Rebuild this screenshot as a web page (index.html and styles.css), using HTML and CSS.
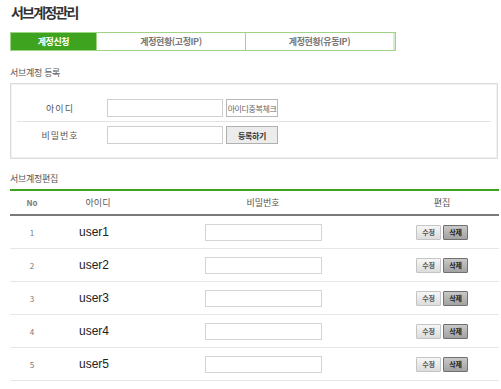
FILE: index.html
```html
<!DOCTYPE html>
<html lang="ko">
<head>
<meta charset="utf-8">
<link rel="stylesheet" href="styles.css">
</head>
<body>
<div class="page">
  <h1 class="title">서브계정관리</h1>
  <div class="tabs">
    <div class="tab tab-1 active">계정신청</div>
    <div class="tab tab-2">계정현황(고정IP)</div>
    <div class="tab tab-3">계정현황(유동IP)</div>
  </div>

  <div class="section-label first">서브계정 등록</div>
  <div class="reg-box">
    <div class="reg-row sep">
      <div class="reg-label">아이디</div>
      <div class="field"></div>
      <div class="btn btn-plain">아이디중복체크</div>
    </div>
    <div class="reg-row second">
      <div class="reg-label">비밀번호</div>
      <div class="field"></div>
      <div class="btn btn-strong">등록하기</div>
    </div>
  </div>

  <div class="section-label">서브계정편집</div>
  <div class="list">
    <div class="list-head">
      <div class="c-no head-no">No</div>
      <div class="c-id">아이디</div>
      <div class="c-pw">비밀번호</div>
      <div class="c-ed">편집</div>
    </div>
    <div class="list-row">
      <div class="c-no">1</div>
      <div class="c-id user">user1</div>
      <div class="c-pw"><div class="pw-field"></div></div>
      <div class="c-ed"><span class="mini mini-edit">수정</span><span class="mini mini-del">삭제</span></div>
    </div>
    <div class="list-row">
      <div class="c-no">2</div>
      <div class="c-id user">user2</div>
      <div class="c-pw"><div class="pw-field"></div></div>
      <div class="c-ed"><span class="mini mini-edit">수정</span><span class="mini mini-del">삭제</span></div>
    </div>
    <div class="list-row">
      <div class="c-no">3</div>
      <div class="c-id user">user3</div>
      <div class="c-pw"><div class="pw-field"></div></div>
      <div class="c-ed"><span class="mini mini-edit">수정</span><span class="mini mini-del">삭제</span></div>
    </div>
    <div class="list-row">
      <div class="c-no">4</div>
      <div class="c-id user">user4</div>
      <div class="c-pw"><div class="pw-field"></div></div>
      <div class="c-ed"><span class="mini mini-edit">수정</span><span class="mini mini-del">삭제</span></div>
    </div>
    <div class="list-row">
      <div class="c-no">5</div>
      <div class="c-id user">user5</div>
      <div class="c-pw"><div class="pw-field"></div></div>
      <div class="c-ed"><span class="mini mini-edit">수정</span><span class="mini mini-del">삭제</span></div>
    </div>
  </div>
</div>
</body>
</html>
```

FILE: styles.css
```css
html, body {
  margin: 0;
  padding: 0;
  background: #ffffff;
}
body {
  font-family: "Noto Sans CJK KR", "Noto Sans", sans-serif;
  color: #555;
}
.page {
  width: 489px;
  padding: 2px 2px 0 10px;
}
.title {
  margin: 0;
  font-size: 14px;
  line-height: 20px;
  font-weight: bold;
  color: #333;
  letter-spacing: -1.8px;
  padding-left: 1px;
}
.tabs {
  margin-top: 10px;
  width: 386px;
  height: 19px;
  display: flex;
  box-sizing: border-box;
  border: 1px solid #9fd486;
}
.tab {
  box-sizing: border-box;
  display: flex;
  align-items: center;
  justify-content: center;
  font-size: 9px;
  font-weight: bold;
  letter-spacing: -0.4px;
  color: #777;
  background: #fff;
}
.tab-1 { width: 85px; }
.tab-2 { width: 149px; border-left: 1px solid #9fd486; }
.tab-3 { flex: 1; border-left: 1px solid #9fd486; border-right: 2px solid #d6ecd0; }
.tab.active {
  background: #3ea41f;
  color: #fff;
}
.section-label {
  margin-top: 13px;
  font-size: 9px;
  line-height: 14px;
  color: #555;
  letter-spacing: -0.3px;
}
.section-label.first {
  margin-top: 15px;
}
.reg-box {
  margin-top: 3px;
  width: 488px;
  box-sizing: border-box;
  border: 1px solid #dcdcdc;
  box-shadow: inset 0 0 0 1px #f1f1f1;
  padding: 13px 6px 14px 6px;
}
.reg-row {
  display: flex;
  align-items: center;
  padding: 2px 0 4px 0;
}
.reg-row.sep {
  border-bottom: 1px solid #e3e3e3;
}
.reg-row.second {
  padding: 4px 0 0 0;
}
.reg-label {
  width: 86px;
  text-align: center;
  font-size: 9px;
  letter-spacing: 1px;
  color: #555;
}
.field {
  margin-left: 4px;
  width: 116px;
  height: 18px;
  box-sizing: border-box;
  border: 1px solid #cfcfcf;
  background: #fff;
}
.btn {
  margin-left: 3px;
  width: 52px;
  height: 18px;
  box-sizing: border-box;
  display: flex;
  align-items: center;
  justify-content: center;
  font-size: 8px;
  letter-spacing: -0.4px;
}
.btn-plain {
  border: 1px solid #b8b8b8;
  background: #fff;
  color: #666;
}
.btn-strong {
  border: 1px solid #b0b0b0;
  background: #ececec;
  color: #333;
  font-weight: bold;
}
.list {
  margin-top: 3px;
  border-top: 2px solid #3ea41f;
}
.list-head, .list-row {
  display: grid;
  grid-template-columns: 44px 88px 242px 1fr;
  align-items: center;
}
.list-head {
  height: 23px;
  border-bottom: 2px solid #7a7a7a;
  font-size: 9px;
  color: #555;
}
.list-head > div {
  text-align: center;
}
.head-no {
  font-weight: bold;
  color: #666;
}
.list-row {
  height: 32px;
  border-bottom: 1px solid #e6e6e6;
}
.c-no {
  text-align: center;
  font-size: 8px;
  color: #777;
}
.c-id.user {
  font-family: "Liberation Sans", Arial, sans-serif;
  font-size: 12px;
  color: #222;
  padding-left: 25px;
}
.c-pw {
  display: flex;
  justify-content: center;
}
.pw-field {
  width: 117px;
  height: 17px;
  box-sizing: border-box;
  border: 1px solid #d4d4d4;
  background: #fff;
  margin-left: 1px;
}
.c-ed {
  display: flex;
  justify-content: center;
  gap: 2px;
  padding-left: 1px;
}
.mini {
  width: 25px;
  height: 15px;
  box-sizing: border-box;
  display: flex;
  align-items: center;
  justify-content: center;
  font-size: 7px;
  font-weight: bold;
  letter-spacing: -0.3px;
  border-radius: 1px;
}
.mini-edit {
  border: 1px solid #c4c4c4;
  background: linear-gradient(#f7f7f7, #dcdcdc);
  color: #555;
}
.mini-del {
  border: 1px solid #707070;
  background: linear-gradient(#c8c8c8, #a2a2a2);
  color: #222;
}
```
